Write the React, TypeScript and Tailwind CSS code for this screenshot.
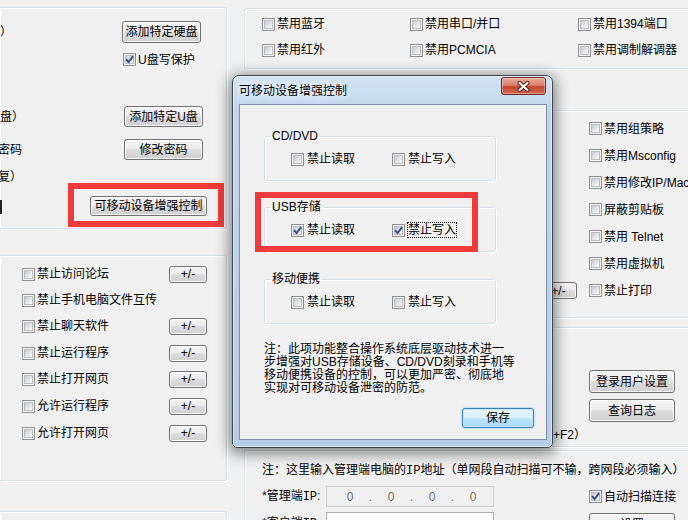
import React from "react";

const Box = ({ checked = false }: { checked?: boolean }) => (
  <span className="relative inline-flex h-[13px] w-[13px] shrink-0 border border-[#8e8f8f] bg-[#f6f6f6] p-[1px]">
    <span className="block h-full w-full border border-[#b9bcc0] bg-[linear-gradient(135deg,#c6c9cd_0%,#dfe1e4_45%,#f8f8f8_100%)]" />
    {checked && (
      <svg className="absolute left-[1px] top-[1px]" width="9" height="9" viewBox="0 0 9 9">
        <path d="M1 4.3 L3.6 7 L8.2 1.2" fill="none" stroke="#34508c" strokeWidth="2" />
      </svg>
    )}
  </span>
);

const Btn = ({ children, className = "" }: { children: React.ReactNode; className?: string }) => (
  <span
    className={`flex shrink-0 items-center justify-center whitespace-nowrap rounded-[3px] border border-[#707070] bg-[linear-gradient(#f2f2f2_0%,#ebebeb_49%,#dddddd_50%,#cfcfcf_100%)] shadow-[inset_0_0_0_1px_#fcfcfc] ${className}`}
  >
    {children}
  </span>
);

const Check = ({ label, checked = false }: { label: React.ReactNode; checked?: boolean }) => (
  <span className="flex items-center whitespace-nowrap">
    <Box checked={checked} />
    <span className="ml-[2px]">{label}</span>
  </span>
);

// monospace bits (the original UI draws these in a bitmap song font)
const Mono = ({ children }: { children: React.ReactNode }) => (
  <span className="font-['Liberation_Mono','Noto_Sans_CJK_SC',monospace]">{children}</span>
);

const leftRows = [
  { t: "禁止访问论坛", b: true, m: "mt-[9px]" },
  { t: "禁止手机电脑文件互传", b: false, m: "mt-[8px]" },
  { t: "禁止聊天软件", b: true, m: "mt-[8px]" },
  { t: "禁止运行程序", b: true, m: "mt-[9px]" },
  { t: "禁止打开网页", b: true, m: "mt-[8px]" },
  { t: "允许运行程序", b: true, m: "mt-[9px]" },
  { t: "允许打开网页", b: true, m: "mt-[9px]" },
];

const topRows = [
  ["禁用蓝牙", "禁用串口/并口", "禁用1394端口"],
  ["禁用红外", "禁用PCMCIA", "禁用调制解调器"],
];

const sideChecks = ["禁用组策略", "禁用Msconfig", "禁用修改IP/Mac", "屏蔽剪贴板", "禁用 Telnet", "禁用虚拟机"];

const group = "border-[#d5dfe5] shadow-[1px_1px_0_#fff,inset_1px_1px_0_#fff]";

const Field = ({ title, checked, focus, className }: { title: string; checked?: boolean; focus?: boolean; className: string }) => (
  <fieldset className={`w-[232px] h-[52px] rounded-[3px] border border-[#d5dfe5] shadow-[1px_1px_0_#fff,inset_1px_1px_0_#fff] ${className}`}>
    <legend className="ml-[5px] px-[2px] leading-[14px]">{title}</legend>
    <div className="mt-[8px] flex h-[16px] items-center pl-[26px]">
      <span className="flex w-[101px] items-center">
        <Box checked={checked} />
        <span className="ml-[3px]">禁止读取</span>
      </span>
      <span className="flex items-center">
        <Box checked={checked} />
        <span className={`ml-[3px] ${focus ? "outline-1 outline-dotted outline-black" : ""}`}>禁止写入</span>
      </span>
    </div>
  </fieldset>
);

export default function App() {
  return (
    <div className="relative flex h-[520px] w-[688px] items-start overflow-hidden bg-[#f0f0f0] font-['Liberation_Sans','Noto_Sans_CJK_SC',sans-serif] text-[12px] leading-[14px] text-black">
      {/* left column */}
      <div className="flex w-[227px] shrink-0 flex-col">
        <div className={`mt-[7px] h-[222px] rounded-r-[3px] border-t border-r border-b ${group}`}>
          <div className="mt-[13px] flex h-[22px] items-center">
            <span className="w-[122px]">）</span>
            <Btn className="h-[22px] w-[79px]">添加特定硬盘</Btn>
          </div>
          <div className="mt-[8px] flex h-[17px] items-center pl-[123px]">
            <Check label="U盘写保护" checked />
          </div>
          <div className="mt-[38px] flex h-[21px] items-center">
            <span className="w-[124px]">盘）</span>
            <Btn className="h-[21px] w-[79px]">添加特定U盘</Btn>
          </div>
          <div className="mt-[12px] flex h-[21px] items-center">
            <span className="w-[124px]">
              <span className="-ml-[2px]">密码</span>
            </span>
            <Btn className="h-[21px] w-[79px]">修改密码</Btn>
          </div>
          <div className="mt-[10px] flex h-[13px] items-center">
            <span className="-ml-[2px]">复）</span>
          </div>
          <div className="flex h-[44px]">
            <div className="w-[68px]">
              <div className="mt-[17px] h-[14px] w-[2px] bg-[#222]" />
            </div>
            <div className="h-[44px] w-[156px] border-[6px] border-[#ef3b3b] pl-[16px] pt-[7px]">
              <Btn className="h-[20px] w-[117px]">可移动设备增强控制</Btn>
            </div>
          </div>
        </div>

        <div className={`mt-[26px] h-[226px] rounded-r-[3px] border-t border-r border-b ${group}`}>
          {leftRows.map((r) => (
            <div key={r.t} className={`flex h-[18px] items-center pl-[22px] ${r.m}`}>
              <Box />
              <span className="ml-[2px] w-[132px] whitespace-nowrap">{r.t}</span>
              {r.b && <Btn className="h-[17px] w-[38px]">+/-</Btn>}
            </div>
          ))}
        </div>

        <div className={`mt-[30px] h-[60px] rounded-tr-[3px] border-t border-r ${group}`} />
      </div>

      {/* right column */}
      <div className="ml-[17px] flex w-[460px] shrink-0 flex-col">
        <div className={`mt-[8px] h-[61px] rounded-l-[3px] border-t border-l border-b ${group}`}>
          {topRows.map((row, i) => (
            <div key={i} className={`grid h-[16px] grid-cols-[148px_168px_1fr] items-center pl-[17px] ${i === 0 ? "mt-[7px]" : "mt-[10px]"}`}>
              {row.map((t) => (
                <Check key={t} label={t} />
              ))}
            </div>
          ))}
        </div>

        <div className={`mt-[41px] h-[208px] rounded-l-[3px] border-t border-l border-b pt-[4px] ${group}`}>
          {sideChecks.map((t) => (
            <div key={t} className="flex h-[27px] items-center pl-[344px]">
              <Check label={t} />
            </div>
          ))}
          <div className="flex h-[27px] items-center pl-[295px]">
            <Btn className="h-[17px] w-[37px]">+/-</Btn>
            <span className="ml-[12px]">
              <Check label="禁止打印" />
            </span>
          </div>
        </div>

        <div className={`mt-[9px] h-[120px] rounded-l-[3px] border-t border-l border-b ${group}`}>
          <Btn className="ml-[344px] mt-[42px] h-[23px] w-[86px]">登录用户设置</Btn>
          <Btn className="ml-[344px] mt-[6px] h-[23px] w-[86px]">查询日志</Btn>
          <div className="mt-[6px] flex h-[14px] w-[341px] justify-end whitespace-nowrap">显示主界面（Ctrl+F2）</div>
        </div>

        <div className={`mt-[3px] h-[90px] rounded-tl-[3px] border-t border-l ${group}`}>
          <div className="mt-[12px] h-[14px] whitespace-nowrap pl-[17px]">
            注：这里输入管理端电脑的<Mono>IP</Mono>地址（单网段自动扫描可不输，跨网段必须输入）
          </div>
          <div className="mt-[9px] flex h-[21px] items-center pl-[17px]">
            <span className="w-[64px] whitespace-nowrap">
              *管理端<Mono>IP</Mono>:
            </span>
            <span className="flex h-[21px] w-[168px] items-center border border-[#c9cbcf] bg-[#f0f0f0] pl-[13px] text-[#6d6d6d]">
              <span className="w-[20px] text-center">0</span>
              <span className="w-[21px] text-center">.</span>
              <span className="w-[20px] text-center">0</span>
              <span className="w-[21px] text-center">.</span>
              <span className="w-[20px] text-center">0</span>
              <span className="w-[21px] text-center">.</span>
              <span className="w-[20px] text-center">0</span>
            </span>
            <span className="ml-[95px]">
              <Check label="自动扫描连接" checked />
            </span>
          </div>
          <div className="mt-[5px] flex items-start pl-[17px]">
            <span className="mt-[4px] w-[64px] whitespace-nowrap">
              *客户端<Mono>IP</Mono>:
            </span>
            <span className="h-[21px] w-[168px] border border-[#abadb3] bg-white" />
            <Btn className="ml-[95px] mt-[1px] h-[23px] w-[86px]">设置</Btn>
          </div>
        </div>
      </div>

      {/* dialog */}
      <div className="absolute left-[232px] top-[75px] flex h-[373px] w-[321px] flex-col rounded-t-[7px] rounded-b-[5px] border border-[#3d4651] bg-[linear-gradient(180deg,#d3e3f4_0%,#bfd5ed_10%,#b6cde8_100%)] shadow-[0_3px_14px_3px_rgba(0,0,0,0.45),inset_0_0_0_1px_rgba(255,255,255,0.55)]">
        <div className="flex h-[28px] items-start justify-between pl-[6px]">
          <span className="mt-[8px] [text-shadow:0_0_6px_#fff,0_0_10px_#fff]">可移动设备增强控制</span>
          <span className="mr-[6px] mt-[1px] flex h-[18px] w-[45px] items-center justify-center rounded-[3px] border border-[#6b2c22] bg-[linear-gradient(#eaaa9a_0%,#d9806c_45%,#c4452d_55%,#d06a50_100%)] shadow-[inset_0_0_0_1px_rgba(255,255,255,0.35)]">
            <svg width="13" height="11" viewBox="0 0 13 11">
              <path d="M2.5 2 L10.5 9 M10.5 2 L2.5 9" stroke="#4a1a12" strokeWidth="4" strokeLinecap="round" />
              <path d="M2.5 2 L10.5 9 M10.5 2 L2.5 9" stroke="#fff" strokeWidth="2.2" strokeLinecap="round" />
            </svg>
          </span>
        </div>
        <div className="mb-[7px] ml-[6px] mr-[5px] flex-1 border border-[#7f8ea3] bg-[#f0f0f0] pl-[24px]">
          <Field title="CD/DVD" className="mt-[24px]" />
          <div className="relative">
            <Field title="USB存储" checked focus className="mt-[19px]" />
            <div className="pointer-events-none absolute -left-[9px] -top-[8px] h-[60px] w-[223px] border-[6px] border-[#ef3b3b]" />
          </div>
          <Field title="移动便携" className="mt-[20px]" />
          <div className="mt-[19px] whitespace-nowrap leading-[13px]">
            <div>注：此项功能整合操作系统底层驱动技术进一</div>
            <div>步增强对USB存储设备、CD/DVD刻录和手机等</div>
            <div>移动便携设备的控制，可以更加严密、彻底地</div>
            <div>实现对可移动设备泄密的防范。</div>
          </div>
          <div className="mt-[13px] flex justify-end pr-[12px]">
            <span className="flex h-[20px] w-[72px] items-center justify-center rounded-[3px] border border-[#3c7fb1] bg-[linear-gradient(#eaf6fd_0%,#d9f0fc_49%,#bee6fd_50%,#a7d9f5_100%)] shadow-[inset_0_0_0_1px_#c4e8fb,0_0_2px_#5cc0f0]">
              保存
            </span>
          </div>
        </div>
      </div>
    </div>
  );
}
